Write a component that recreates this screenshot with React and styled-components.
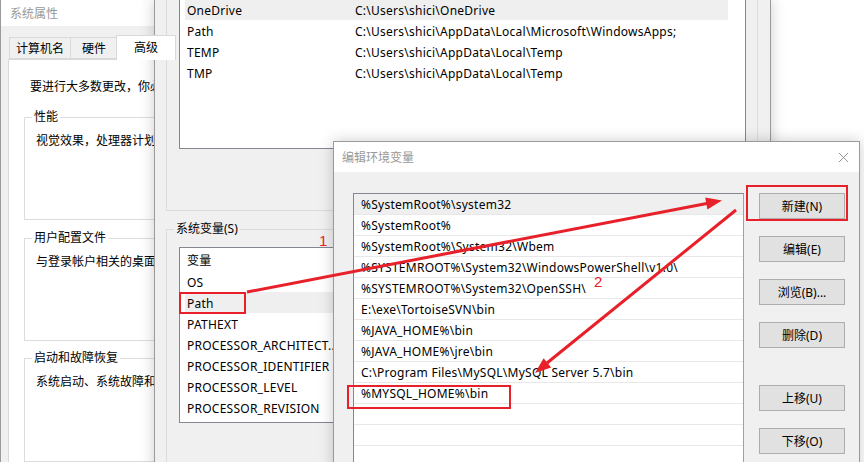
import React from "react";
import styled, { createGlobalStyle } from "styled-components";

const GlobalStyle = createGlobalStyle`
  html, body {
    margin: 0;
    padding: 0;
  }
  body {
    font-family: "Noto Sans", "Noto Sans CJK SC", sans-serif;
    font-size: 12px;
    color: #000;
  }
`;

const userVars = [
  ["OneDrive", "C:\\Users\\shici\\OneDrive"],
  ["Path", "C:\\Users\\shici\\AppData\\Local\\Microsoft\\WindowsApps;"],
  ["TEMP", "C:\\Users\\shici\\AppData\\Local\\Temp"],
  ["TMP", "C:\\Users\\shici\\AppData\\Local\\Temp"],
];

const sysVars = [
  ["OS", "Windows_NT"],
  ["Path", "C:\\Program Files\\..."],
  ["PATHEXT", ".COM;.EXE;.BAT;.CMD"],
  ["PROCESSOR_ARCHITECT...", "AMD64"],
  ["PROCESSOR_IDENTIFIER", "Intel64 Family 6"],
  ["PROCESSOR_LEVEL", "6"],
  ["PROCESSOR_REVISION", "9e0a"],
];

const pathEntries = [
  "%SystemRoot%\\system32",
  "%SystemRoot%",
  "%SystemRoot%\\System32\\Wbem",
  "%SYSTEMROOT%\\System32\\WindowsPowerShell\\v1.0\\",
  "%SYSTEMROOT%\\System32\\OpenSSH\\",
  "E:\\exe\\TortoiseSVN\\bin",
  "%JAVA_HOME%\\bin",
  "%JAVA_HOME%\\jre\\bin",
  "C:\\Program Files\\MySQL\\MySQL Server 5.7\\bin",
  "%MYSQL_HOME%\\bin",
  "",
  "",
];

function App() {
  return (
    <>
      <GlobalStyle />
      <Desktop>
        {/* 系统属性 */}
        <Window x={0} y={-1} w={330} h={480}>
          <TitleBar>系统属性</TitleBar>
          <TabRow>
            <Tab w={61}>计算机名</Tab>
            <Tab w={47}>硬件</Tab>
            <Tab w={60} active>
              高级
            </Tab>
          </TabRow>
          <TabPanel>
            <Intro>要进行大多数更改，你必须作为管理员登录。</Intro>
            <Group h={103} mt={22}>
              <GroupLabel bg="#fff">性能</GroupLabel>
              视觉效果，处理器计划，内存使用，以及虚拟内存
            </Group>
            <Group h={103} mt={18}>
              <GroupLabel bg="#fff">用户配置文件</GroupLabel>
              与登录帐户相关的桌面设置
            </Group>
            <Group h={104} mt={17}>
              <GroupLabel bg="#fff">启动和故障恢复</GroupLabel>
              系统启动、系统故障和调试信息
            </Group>
          </TabPanel>
        </Window>

        {/* 环境变量 */}
        <Window x={154} y={-1} w={617} h={480}>
          <EnvBody>
            <UserGroup>
              <ListBox w={567} h={151} mt={-2}>
                {userVars.map(([name, value], i) => (
                  <VarRow key={name} selected={i === 0}>
                    <NameCell>{name}</NameCell>
                    <span>{value}</span>
                  </VarRow>
                ))}
              </ListBox>
            </UserGroup>
            <SysGroup>
              <GroupLabel bg="#f0f0f0">系统变量(S)</GroupLabel>
              <ListBox w={567} h={176}>
                <HeaderRow>
                  <NameCell>变量</NameCell>
                  <span>值</span>
                </HeaderRow>
                {sysVars.map(([name, value]) => (
                  <VarRow key={name} selected={name === "Path"}>
                    <NameCell>{name}</NameCell>
                    <span>{value}</span>
                  </VarRow>
                ))}
              </ListBox>
            </SysGroup>
          </EnvBody>
        </Window>

        {/* 编辑环境变量 */}
        <Window x={333} y={141} w={527} h={340}>
          <DialogTitle>
            <span>编辑环境变量</span>
            <CloseIcon viewBox="0 0 12 12">
              <path d="M1 1 L11 11 M11 1 L1 11" stroke="#8c8c8c" strokeWidth="1" />
            </CloseIcon>
          </DialogTitle>
          <DialogBody>
            <PathList>
              {pathEntries.map((entry, i) => (
                <PathRow key={i} selected={i === 0}>
                  {entry}
                </PathRow>
              ))}
            </PathList>
            <ButtonColumn>
              <Button>新建(N)</Button>
              <Button>编辑(E)</Button>
              <Button>浏览(B)...</Button>
              <Button>删除(D)</Button>
              <Button mt={20}>上移(U)</Button>
              <Button>下移(O)</Button>
            </ButtonColumn>
          </DialogBody>
        </Window>

        {/* 标注 */}
        <Annotations viewBox="0 0 864 462">
          <rect x="180" y="293" width="65" height="20" fill="none" stroke="#e8202a" strokeWidth="2" />
          <text x="319" y="246" fill="#e8202a" fontSize="15">
            1
          </text>
          <line x1="247" y1="292" x2="708" y2="203.3" stroke="#e8202a" strokeWidth="3" />
          <polygon points="722,200.5 707.4,209.4 705.2,197.6" fill="#e8202a" />
          <rect x="747" y="186" width="100" height="34" fill="none" stroke="#e8202a" strokeWidth="2" />
          <text x="594" y="287" fill="#e8202a" fontSize="15">
            2
          </text>
          <line x1="736" y1="210" x2="547" y2="363" stroke="#e8202a" strokeWidth="3" />
          <polygon points="535,373 551.2,367.6 543.6,358.2" fill="#e8202a" />
          <rect x="348" y="386" width="162" height="22" fill="none" stroke="#e8202a" strokeWidth="2" />
        </Annotations>
      </Desktop>
    </>
  );
}

export default App;

const Desktop = styled.div`
  position: relative;
  width: 864px;
  height: 462px;
  overflow: hidden;
  background: #fff;
`;

const Window = styled.div`
  position: absolute;
  left: ${(p) => p.x}px;
  top: ${(p) => p.y}px;
  width: ${(p) => p.w}px;
  height: ${(p) => p.h}px;
  box-sizing: border-box;
  background: #f0f0f0;
  border: 1px solid #9a9a9a;
  box-shadow: 0 0 14px rgba(0, 0, 0, 0.2);
  display: flex;
  flex-direction: column;
`;

const TitleBar = styled.div`
  height: 26px;
  flex: none;
  background: #fff;
  color: #999;
  padding-left: 9px;
  display: flex;
  align-items: center;
`;

const TabRow = styled.div`
  display: flex;
  align-items: flex-end;
  height: 24px;
  margin-top: 9px;
  padding-left: 8px;
  position: relative;
  z-index: 1;
`;

const Tab = styled.div`
  width: ${(p) => p.w}px;
  height: ${(p) => (p.active ? 25 : 22)}px;
  margin-bottom: ${(p) => (p.active ? -1 : 0)}px;
  margin-left: ${(p) => (p.active ? -1 : 0)}px;
  box-sizing: border-box;
  border: 1px solid #d9d9d9;
  border-bottom: ${(p) => (p.active ? "none" : "1px solid #d9d9d9")};
  border-right: ${(p) => (p.active ? "1px solid #d9d9d9" : "none")};
  background: ${(p) => (p.active ? "#fff" : "#f0f0f0")};
  display: flex;
  align-items: center;
  justify-content: center;
  padding-bottom: ${(p) => (p.active ? 3 : 0)}px;
`;

const TabPanel = styled.div`
  flex: 1;
  margin-left: 7px;
  background: #fff;
  border: 1px solid #d9d9d9;
  padding: 19px 0 0 15px;
`;

const Intro = styled.div`
  line-height: 16px;
  margin-left: 6px;
  white-space: nowrap;
`;

const Group = styled.div`
  position: relative;
  box-sizing: border-box;
  height: ${(p) => p.h}px;
  margin-top: ${(p) => p.mt}px;
  border: 1px solid #dcdcdc;
  padding: 15px 0 0 11px;
  line-height: 16px;
  white-space: nowrap;
`;

const GroupLabel = styled.span`
  position: absolute;
  top: -9px;
  left: 7px;
  padding: 0 2px;
  line-height: 16px;
  background: ${(p) => p.bg};
  white-space: nowrap;
`;

const EnvBody = styled.div`
  padding-left: 11px;
  display: flex;
  flex-direction: column;
`;

const UserGroup = styled.div`
  width: 592px;
  height: 211px;
  box-sizing: border-box;
  border: 1px solid #dcdcdc;
  border-top: none;
  padding-left: 12px;
`;

const SysGroup = styled.div`
  position: relative;
  width: 592px;
  height: 260px;
  box-sizing: border-box;
  margin-top: 18px;
  border: 1px solid #dcdcdc;
  padding: 17px 0 0 12px;
`;

const ListBox = styled.div`
  width: ${(p) => p.w}px;
  height: ${(p) => p.h}px;
  margin-top: ${(p) => p.mt || 0}px;
  box-sizing: border-box;
  background: #fff;
  border: 1px solid #828790;
  overflow: hidden;
`;

const VarRow = styled.div`
  display: flex;
  height: 21px;
  align-items: center;
  margin: 0 17px 0 5px;
  padding: 1px 0 0 2px;
  box-sizing: border-box;
  background: ${(p) => (p.selected ? "#efefef" : "transparent")};
  white-space: nowrap;
  letter-spacing: 0.25px;
`;

const HeaderRow = styled(VarRow)`
  height: 23px;
`;

const NameCell = styled.span`
  width: 168px;
  flex: none;
`;

const DialogTitle = styled.div`
  height: 30px;
  flex: none;
  background: #fff;
  color: #999;
  padding: 0 10px 0 8px;
  display: flex;
  align-items: center;
  justify-content: space-between;
`;

const CloseIcon = styled.svg`
  width: 11px;
  height: 11px;
`;

const DialogBody = styled.div`
  display: flex;
  align-items: flex-start;
  padding: 21px 0 0 19px;
  gap: 15px;
`;

const PathList = styled.div`
  width: 391px;
  height: 300px;
  box-sizing: border-box;
  background: #fff;
  border: 1px solid #828790;
  border-right-color: #a0a0a0;
`;

const PathRow = styled.div`
  height: 21px;
  box-sizing: border-box;
  border-bottom: 1px solid #e8e8e8;
  padding: 1px 0 0 7px;
  display: flex;
  align-items: center;
  background: ${(p) => (p.selected ? "#efefef" : "#fff")};
  white-space: nowrap;
  letter-spacing: 0.25px;
`;

const ButtonColumn = styled.div`
  display: flex;
  flex-direction: column;
  gap: 17px;
  padding-top: 0;
`;

const Button = styled.div`
  width: 86px;
  height: 26px;
  margin-top: ${(p) => p.mt || 0}px;
  box-sizing: border-box;
  background: #e1e1e1;
  border: 1px solid #adadad;
  display: flex;
  align-items: center;
  justify-content: center;
`;

const Annotations = styled.svg`
  position: absolute;
  left: 0;
  top: 0;
  width: 864px;
  height: 462px;
  pointer-events: none;
  font-family: "Liberation Sans", sans-serif;
`;
